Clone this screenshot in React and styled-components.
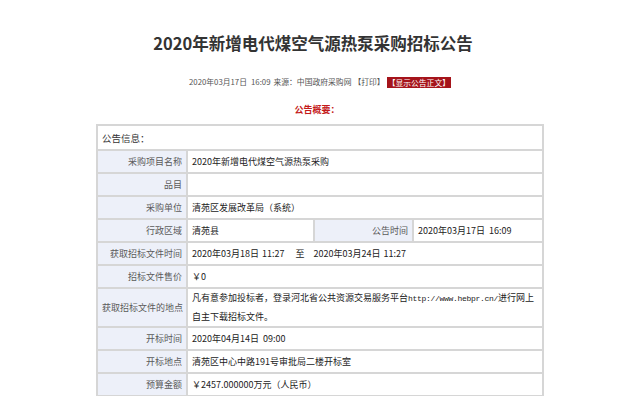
import React from "react";
import styled, { createGlobalStyle } from "styled-components";

const GlobalStyle = createGlobalStyle`
  body {
    margin: 0;
    background: #ffffff;
    font-family: "Noto Sans CJK SC", "Noto Sans", sans-serif;
  }
`;

const Page = styled.div`
  width: 640px;
  height: 396px;
  overflow: hidden;
  display: flex;
  flex-direction: column;
  align-items: center;
`;

const Title = styled.h1`
  margin: 31px 14px 0 0;
  font-size: 16.5px;
  line-height: 24px;
  font-weight: 700;
  color: #333;
`;

const Meta = styled.div`
  margin-top: 21px;
  font-size: 7.8px;
  line-height: 12px;
  color: #555;
  display: flex;
  align-items: center;
  gap: 2px;
`;

const ShowBtn = styled.span`
  background: #a5141b;
  color: #fff;
  padding: 0 1px;
  line-height: 11px;
`;

const Summary = styled.div`
  margin-top: 16px;
  margin-right: 6px;
  font-size: 9px;
  line-height: 12px;
  font-weight: 700;
  color: #c41a1a;
`;

const Table = styled.table`
  margin-top: 8px;
  width: 446px;
  border-collapse: collapse;
  table-layout: fixed;
  font-size: 9px;
  color: #333;
`;

const Cell = styled.td`
  border: 2px solid #d6d6d6;
  height: ${({ $h }) => $h || 21}px;
  padding: 0 4px;
  line-height: 18px;
  vertical-align: middle;
  background: ${({ $label }) => ($label ? "#edf0f9" : "#fff")};
  color: ${({ $label }) => ($label ? "#5a5a5a" : "#222")};
  text-align: ${({ $label }) => ($label ? "right" : "left")};
  white-space: nowrap;
`;

const HeadCell = styled.td`
  border: 2px solid #d6d6d6;
  height: 23px;
  padding: 0 4px;
  font-size: 9.5px;
  color: #333;
`;

const Mono = styled.span`
  font-family: "Liberation Mono", monospace;
  font-size: 8px;
  letter-spacing: -0.3px;
`;

const Gap = styled.span`
  display: inline-block;
  width: ${({ $w }) => $w}px;
`;

const rows = [
  ["采购项目名称", "2020年新增电代煤空气源热泵采购"],
  ["品目", ""],
  ["采购单位", "清苑区发展改革局（系统）"],
];

export default function App() {
  return (
    <Page>
      <GlobalStyle />
      <Title>2020年新增电代煤空气源热泵采购招标公告</Title>
      <Meta>
        <span>
          2020年03月17日<Gap $w={4} />16:09<Gap $w={3} />来源：中国政府采购网
        </span>
        <span>【打印】</span>
        <ShowBtn>【显示公告正文】</ShowBtn>
      </Meta>
      <Summary>公告概要：</Summary>
      <Table>
        <colgroup>
          <col style={{ width: 90 }} />
          <col style={{ width: 127 }} />
          <col style={{ width: 99 }} />
          <col style={{ width: 130 }} />
        </colgroup>
        <tbody>
          <tr>
            <HeadCell colSpan={4}>公告信息：</HeadCell>
          </tr>
          {rows.map(([k, v]) => (
            <tr key={k}>
              <Cell $label>{k}</Cell>
              <Cell colSpan={3}>{v}</Cell>
            </tr>
          ))}
          <tr>
            <Cell $label>行政区域</Cell>
            <Cell>清苑县</Cell>
            <Cell $label>公告时间</Cell>
            <Cell>
              2020年03月17日<Gap $w={4} />16:09
            </Cell>
          </tr>
          <tr>
            <Cell $label>获取招标文件时间</Cell>
            <Cell colSpan={3}>
              2020年03月18日<Gap $w={3} />11:27<Gap $w={11} />至<Gap $w={9} />2020年03月24日<Gap $w={3} />11:27
            </Cell>
          </tr>
          <tr>
            <Cell $label>招标文件售价</Cell>
            <Cell colSpan={3}>￥0</Cell>
          </tr>
          <tr>
            <Cell $label>获取招标文件的地点</Cell>
            <Cell colSpan={3} $h={37}>
              凡有意参加投标者，登录河北省公共资源交易服务平台<Mono>http://www.hebpr.cn/</Mono>进行网上
              <br />
              自主下载招标文件。
            </Cell>
          </tr>
          <tr>
            <Cell $label>开标时间</Cell>
            <Cell colSpan={3}>
              2020年04月14日<Gap $w={4} />09:00
            </Cell>
          </tr>
          <tr>
            <Cell $label>开标地点</Cell>
            <Cell colSpan={3}>清苑区中心中路191号审批局二楼开标室</Cell>
          </tr>
          <tr>
            <Cell $label>预算金额</Cell>
            <Cell colSpan={3}>￥2457.000000万元（人民币）</Cell>
          </tr>
        </tbody>
      </Table>
    </Page>
  );
}
